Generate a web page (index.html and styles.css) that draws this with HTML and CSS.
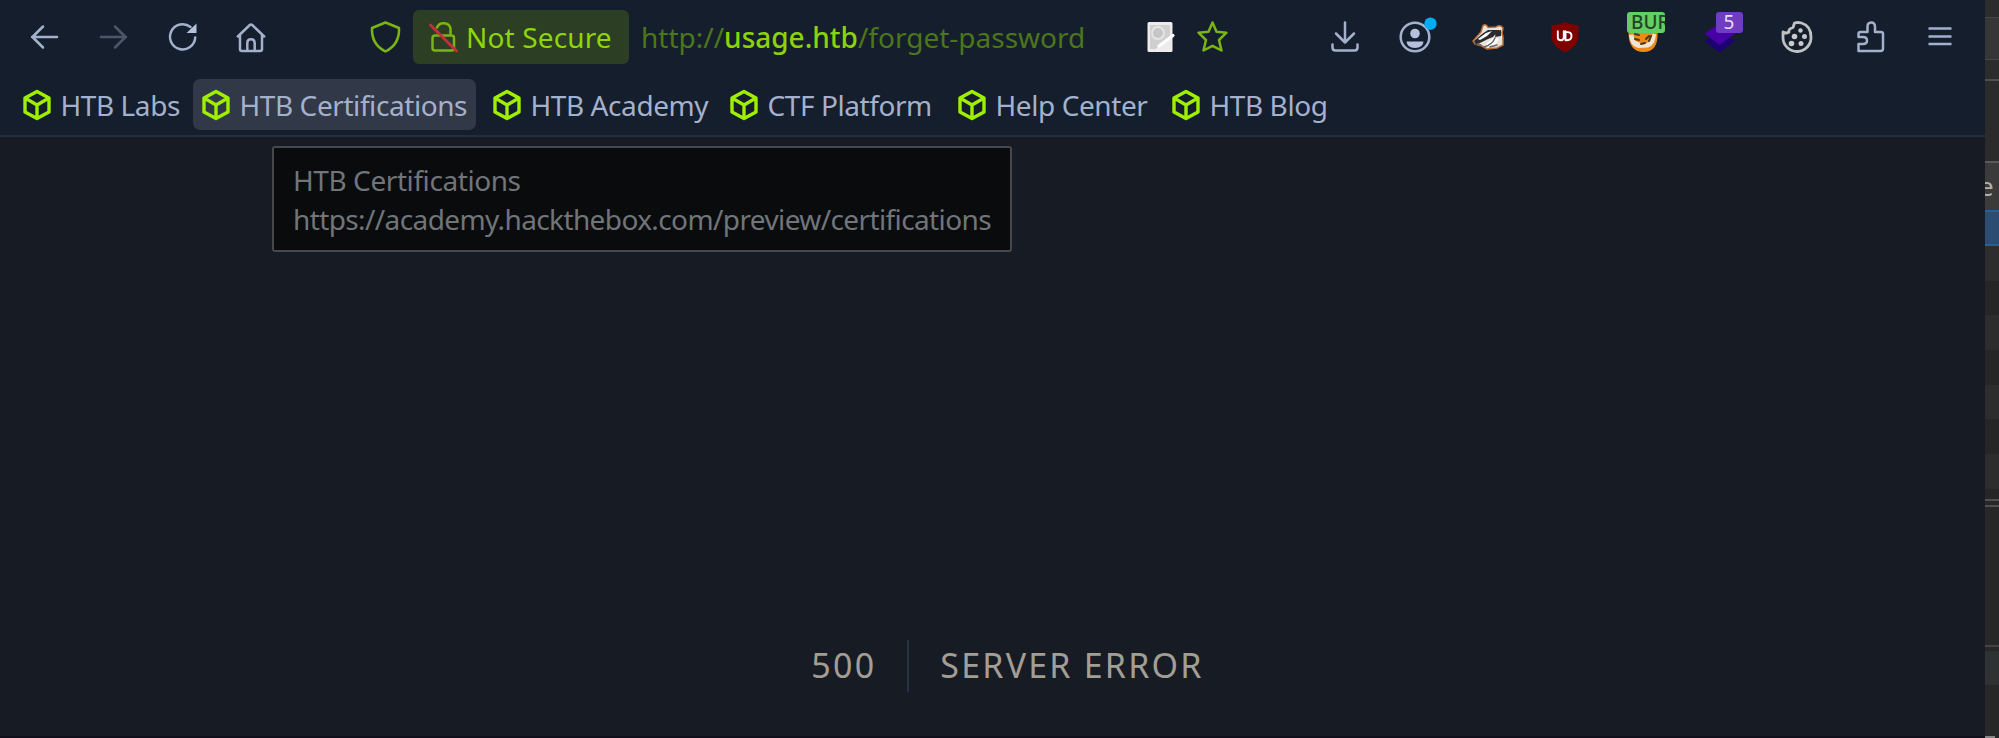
FILE: index.html
```html
<!DOCTYPE html>
<html lang="en">
<head>
<meta charset="utf-8">
<title>Server Error</title>
<link rel="stylesheet" href="styles.css">
</head>
<body>
<svg width="0" height="0" class="defs">
  <symbol id="cube" viewBox="0 0 28 32">
    <path d="M14 2.500 26 9v14L14 29.500 2 23V9zM2.500 9.300 14 16l11.500-6.700M14 16v13" fill="none" stroke="#9fef00" stroke-width="3.400" stroke-linejoin="round"/>
  </symbol>
</svg>
<div class="screen">
  <div class="browser">
    <header class="chrome">
      <div class="toolbar">
        <nav class="nav">
          <svg class="icon" viewBox="0 0 32 32"><path d="M29 16H4M15 5.500 4.500 16 15 26.500"/></svg>
          <svg class="icon dim" viewBox="0 0 32 32"><path d="M4 16h25M18 5.500 28.500 16 18 26.500"/></svg>
          <svg class="icon" viewBox="0 0 32 32"><path d="M29.200 16.500A12.600 12.600 0 1 1 24.500 6"/><path d="M30.500 2.500v9.500H20.500z" class="solid"/></svg>
          <svg class="icon" viewBox="0 0 32 32"><path d="M2.800 15.500 14.800 4q1.200-1 2.400 0L29.200 15.500M5 14v14q0 2 2 2h18q2 0 2-2V14M12.300 29.500V22q0-3.700 3.700-3.700t3.700 3.700v7.500"/></svg>
        </nav>
        <div class="urlbar">
          <svg class="icon shield" viewBox="0 0 32 32"><path d="M16.500 1.500 30 7C30.500 17.500 26.500 25.500 16.500 30.500 6.500 25.500 2.500 17.500 3 7z"/></svg>
          <div class="insecure">
            <svg class="icon lock" viewBox="0 0 32 34"><path d="M9 7.500a7 6.500 0 0 1 13.500 1V15.500M8 15.500h15.500q2.500 0 2.500 2.500v10q0 2.500-2.500 2.500H7q-2.500 0-2.500-2.500V18q0-2.500 2.500-2.500"/><path d="M2.500 5 28.500 31" class="slash"/></svg>
            <span>Not Secure</span>
          </div>
          <div class="url">http://<b>usage.htb</b>/forget-password</div>
          <svg class="icon note" viewBox="0 0 32 32"><rect x="3.500" y="1" width="25" height="30" rx="1.500" fill="#ececec" stroke="none"/><path d="M6 4h20v13L11 28H6z" fill="#cfcfcf" stroke="none"/><circle cx="14" cy="12" r="6" stroke="#e6e6e6" stroke-width="1.800" fill="#c6c6c6"/><path d="M15 25 29 14.500" stroke="#fff" stroke-width="3.200"/></svg>
          <svg class="icon star" viewBox="0 0 32 32"><path d="M16.500 1.500 20.500 10.700 30.500 11.700 23 19 25.500 29.500 16.500 24.800 7.500 29.500 10 19 2.500 11.700 12.500 10.700z"/></svg>
        </div>
        <div class="extensions">
          <svg class="icon" viewBox="0 0 32 32"><path d="M16 1.500v20M7 12.500l9 9 9-9M3.500 23.500v3q0 3 3 3h19q3 0 3-3v-3"/></svg>
          <svg class="icon" viewBox="0 0 32 32"><circle cx="16" cy="16" r="14.300"/><circle cx="16" cy="12.500" r="4.800" class="solid"/><path d="M7.500 20.500h17q-.5 6.500-8.500 6.500t-8.500-6.500z" class="solid"/><circle cx="31.500" cy="2.700" r="6.200" fill="#00adf5" stroke="none"/></svg>
          <svg class="icon" viewBox="0 0 32 32"><path d="M1 20 9 11 11 4.500q3-2 5 2l8-.5q4-3 7 1l-1 5 1 4v8l-6 3-10 1-5-3-7-2z" fill="#e9e5dd" stroke="#b86e36" stroke-width="1.500"/><path d="M2 20 10 13l6-4 11 0-6 7-5 2-8 4-4 2zM24 10l5-1v6l-6 1z" fill="#2b2b2e" stroke="none"/><path d="m6 18 8-6 6-2-5 5-7 4z" fill="#fff" stroke="none"/><path d="m14 23 7-6 6 1-4 6-8 1z" fill="#fff" stroke="none"/><path d="M12 26q8-2 11-9M5 23l4 1M18 26l7-2" stroke="#666" stroke-width="1.400"/></svg>
          <svg class="icon" viewBox="0 0 32 32"><path d="M16 .8q4 3 13.500 3.200V17q-1 8-13.500 14.500Q3.500 25 2.500 17V4Q12 3.800 16 .8z" fill="#800000" stroke="none"/><path d="M8.800 10.300v6q0 3 3 3t3-3v-6M16.500 10.300v9h1.500q4.500 0 4.500-4.200t-4.500-4H16.500" stroke="#fff" stroke-width="1.900"/></svg>
          <div class="ext">
            <svg class="icon" viewBox="0 0 32 32"><path d="M1.500 11q0 20 15 20t14-20z" fill="#ef8a16" stroke="none"/><path d="M2 14q1 11 9 13l10-.5q7-2 8-13l-3-1-3 8-7 3-8-4-2-6z" fill="#eee6da" stroke="none"/><path d="m8 18 4 1M19 18l3-3M14 23l4-1M8 13l4 1M22 20l2-5" stroke="#53331d" stroke-width="2"/></svg>
            <span class="badge bur">BUR</span>
          </div>
          <div class="ext">
            <svg class="icon" viewBox="0 0 32 32"><path d="m.5 20 15-9 15.500 9-15.500 11.500z" fill="#1e0073" stroke="none"/><path d="m.5 12.500 15-10L31 12.500 15.500 24z" fill="#4700a6" stroke="none"/></svg>
            <span class="badge five">5</span>
          </div>
          <svg class="icon cookie" viewBox="0 0 32 32"><path d="M13.500 2q3-1 7 0Q30 5 30 16a14 14 0 0 1-28 1v-6q3 2 6 0-1-3 4-4.500z"/><g fill="#c9c9c9" stroke="none"><circle cx="19.500" cy="9.500" r="2.200"/><circle cx="13.500" cy="15.500" r="2.800"/><circle cx="23.500" cy="15.500" r="2.500"/><circle cx="10.500" cy="22.500" r="2.800"/><circle cx="20" cy="22.500" r="2.500"/></g></svg>
          <svg class="icon" viewBox="0 0 32 32"><path d="M3.500 30h22q2.500 0 2.500-2.500V13q0-2-2-2h-6V6q0-4.500-3.800-4.500T12.500 6v5H5.500q-2 0-2 2v3H8q4 0 4 3.500T8 23H3.500z"/></svg>
          <svg class="icon" viewBox="0 0 32 32"><path d="M4.500 7.500h23M4.500 15.500h23M4.500 23h23" stroke-linecap="butt"/></svg>
        </div>
      </div>
      <nav class="bookmarks">
        <a class="bookmark"><svg><use href="#cube"/></svg>HTB Labs</a>
        <a class="bookmark hovered"><svg><use href="#cube"/></svg>HTB Certifications</a>
        <a class="bookmark"><svg><use href="#cube"/></svg>HTB Academy</a>
        <a class="bookmark"><svg><use href="#cube"/></svg>CTF Platform</a>
        <a class="bookmark"><svg><use href="#cube"/></svg>Help Center</a>
        <a class="bookmark"><svg><use href="#cube"/></svg>HTB Blog</a>
      </nav>
      <div class="tooltip"><div>HTB Certifications</div><div class="address">https://academy.hackthebox.com/preview/certifications</div></div>
    </header>
    <main class="page">
      <div class="error"><div class="code">500</div><div class="message">SERVER ERROR</div></div>
    </main>
  </div>
  <aside class="behind">
    <div class="tabs"></div>
    <div class="rule-row"></div>
    <div class="pane"></div>
    <div class="head"><span>e</span></div>
    <div class="selected"></div>
    <div class="rows"></div>
    <div class="splitter"></div>
    <div class="body"></div>
    <div class="status"></div>
    <div class="foot"></div>
  </aside>
</div>
</body>
</html>
```

FILE: styles.css
```css
* { box-sizing: border-box; }

body {
  margin: 0;
  background: #171b24;
  font-family: "Noto Sans", sans-serif;
  font-size: 28px;
}

.defs { position: absolute; }

.screen {
  display: grid;
  grid-template-columns: 1985px 14px;
  width: 1999px;
  height: 738px;
  overflow: hidden;
}

.browser {
  display: flex;
  flex-direction: column;
  border-bottom: 2px solid #10101c;
}

.chrome {
  position: relative;
  height: 137px;
  background: #151e2c;
  border-bottom: 2px solid #242e3d;
}

.toolbar {
  display: grid;
  grid-template-columns: 342px 964px 679px;
  height: 73px;
  align-items: center;
}

.icon {
  display: block;
  width: 32px;
  height: 32px;
  overflow: visible;
  fill: none;
  stroke: #a4b1cd;
  stroke-width: 2.500;
  stroke-linecap: round;
  stroke-linejoin: round;
}

.icon .solid { fill: #b4c0dd; stroke: none; }
.dim { stroke: #4c5667; }

.nav {
  display: flex;
  gap: 37px;
  padding-left: 28px;
}

.urlbar {
  display: grid;
  grid-template-columns: 44px 229px 502px 52px 32px;
  align-items: center;
  padding-left: 27px;
  color: #8bd20b;
}

.shield, .lock, .star { stroke: #7ab515; }
.lock { width: 32px; height: 34px; }
.lock .slash { stroke: #c52f3c; stroke-width: 2.800; }

.insecure {
  display: flex;
  align-items: center;
  gap: 6px;
  width: 216px;
  height: 54px;
  padding-left: 15px;
  border-radius: 6px;
  background: #2c3e24;
  color: #8ed60a;
  letter-spacing: 0.150px;
  white-space: nowrap;
}

.url {
  margin-left: -1px;
  color: #4b761b;
  white-space: nowrap;
}

.url b {
  color: #8bd20b;
  font-weight: 500;
}

.extensions {
  display: grid;
  grid-template-columns: 70px 73.500px 77px 78px 76.500px 77px 74.500px 68.500px 32px;
  align-items: center;
  padding-left: 22.500px;
}

.cookie { stroke: #bfc1c4; stroke-width: 2.800; }

.ext { position: relative; }

.badge {
  position: absolute;
  top: -9px;
  height: 21px;
  border-radius: 3px;
  font-size: 19px;
  line-height: 21px;
  overflow: hidden;
}

.bur {
  left: 0;
  width: 38px;
  padding-left: 4px;
  background: #63ce66;
  color: #1d4624;
  font-weight: 500;
}

.five {
  left: 12px;
  width: 27px;
  background: #6f3cc3;
  color: #e6dcf5;
  text-align: center;
}

.bookmarks {
  display: grid;
  grid-template-columns: 179px 291px 237px 228px 214px 180px;
  padding: 6px 0 0 14px;
}

.bookmark {
  display: flex;
  align-items: center;
  gap: 10px;
  height: 51px;
  padding-left: 8.500px;
  color: #a4b1cd;
  letter-spacing: -0.420px;
  white-space: nowrap;
}

.bookmark svg { flex: none; width: 28px; height: 32px; }

.hovered {
  width: 283px;
  border-radius: 7px;
  background: #313948;
}

.tooltip {
  position: absolute;
  top: 146px;
  left: 272px;
  width: 740px;
  height: 106px;
  padding: 13px 0 0 19px;
  border: 2px solid #46484b;
  border-radius: 3px;
  background: #0a0b0d;
  color: #70757a;
  line-height: 39px;
  letter-spacing: -0.420px;
  white-space: nowrap;
}

.address { letter-spacing: -0.610px; }

.page {
  flex: 1;
  display: flex;
  justify-content: center;
  padding: 503px 0 0 30px;
}

.error {
  display: flex;
  height: 52px;
  color: #a39e95;
  font-size: 34px;
  line-height: 50px;
  letter-spacing: 2.200px;
}

.code {
  padding: 0 31px;
  border-right: 2px solid #273344;
}

.message { padding: 0 31px; }

.behind {
  display: flex;
  flex-direction: column;
  background: #272727;
  overflow: hidden;
}

.behind > div { flex: none; }
.tabs { height: 60px; border-top: 17px solid #2c2c2c; background: #363636; box-shadow: inset 0 1px #474747, inset 0 -1px #474747; }
.rule-row { height: 21px; background: #2c2c2c; border-bottom: 2px solid #515151; }
.pane { height: 82px; background: #2b2b2c; border-bottom: 2px solid #5a5a5a; }
.head { height: 47px; background: #3b3b3b; }
.head span { display: block; margin-left: -6px; padding-top: 4px; color: #b4aea5; font-size: 26px; line-height: 38px; }
.selected { height: 36px; background: #2a4d71; border: solid #285f94; border-width: 2px 0; }
.rows { height: 253px; background: repeating-linear-gradient(#2d2d2d 0 34.700px, #262626 34.700px 69.400px); }
.splitter { height: 8px; border: solid #515151; border-width: 2px 0; }
.body { height: 140px; border-bottom: 2px solid #434343; }
.status { height: 38px; border-top: 4px solid #272727; background: #2e3233; }
.foot { height: 53px; width: 10px; border-bottom: 2px solid #888; }
```
